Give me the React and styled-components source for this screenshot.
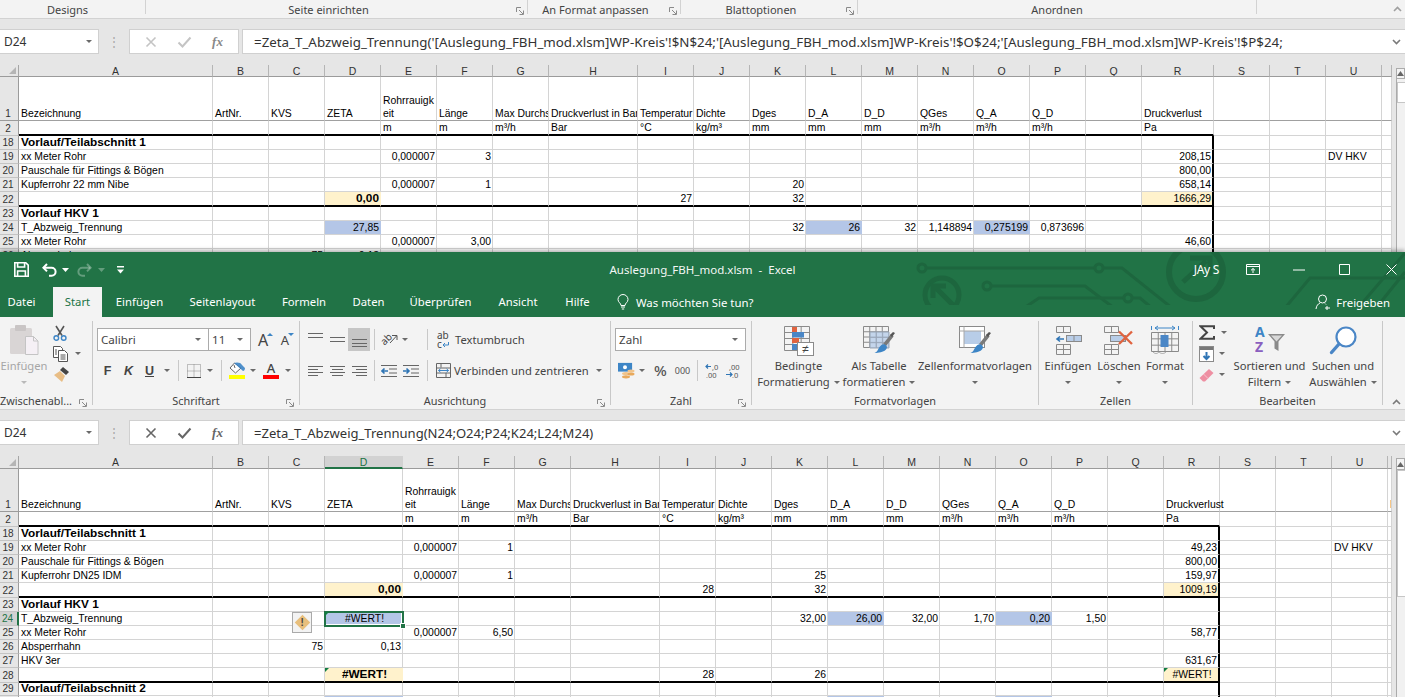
import React from 'react';
import styled, { createGlobalStyle } from 'styled-components';

const Global = createGlobalStyle`
  html, body { margin: 0; padding: 0; background: #e6e6e6; overflow: hidden; }
  #root { width: 1405px; height: 697px; overflow: hidden; }
  * { box-sizing: border-box; }
`;
const UI = `"Noto Sans", "Open Sans", sans-serif`;
const CELL = `"Liberation Sans", Arial, sans-serif`;
const GREEN = '#217346';

const Page = styled.div`width:1405px;height:697px;display:flex;flex-direction:column;overflow:hidden;font-family:${UI};`;
const BackWindow = styled.div`height:252px;overflow:hidden;flex:none;background:#e6e6e6;`;
const FrontWindow = styled.div`flex:1;min-height:0;position:relative;box-shadow:0 -2px 4px rgba(0,0,0,.3);background:#e6e6e6;`;

/* ribbon tail of the back window */
const Tail = styled.div`height:19px;display:flex;background:#f3f3f3;border-bottom:1px solid #d2d2d2;`;
const TailGroup = styled.div`
  width:${p=>p.$w}px;height:14px;padding-right:${p=>p.$pr||0}px;position:relative;flex:none;
  border-right:${p=>p.$last?'none':'1px solid #d2d2d2'};
  font-size:11px;line-height:20px;color:#444;text-align:center;white-space:nowrap;
`;
const TailLauncher = styled.span`position:absolute;right:3px;top:7px;display:flex;`;
const TailCollapse = styled.div`flex:1;display:flex;justify-content:flex-end;align-items:center;height:18px;padding-right:3px;`;

/* formula bar */
const FBar = styled.div`height:46px;padding-top:10px;display:flex;background:#e6e6e6;flex:none;`;
const NameBox = styled.div`
  width:99px;height:25px;background:#fff;border:1px solid #d0d0d0;border-left:none;
  display:flex;align-items:center;justify-content:space-between;padding:0 6px 0 4px;
  font-size:12px;color:#333;
`;
const Grip = styled.div`width:30px;height:25px;display:flex;align-items:center;justify-content:center;color:#a8a8a8;font-size:12px;letter-spacing:0;`;
const FxBox = styled.div`
  width:110px;height:25px;background:#fff;border:1px solid #d0d0d0;display:flex;align-items:center;justify-content:space-around;padding:0 5px;
`;
const FxText = styled.span`font-family:"Liberation Serif",serif;font-style:italic;font-weight:700;font-size:13px;color:${p=>p.$dim?'#888':'#666'};`;
const Formula = styled.div`
  flex:1;margin-left:3px;height:25px;background:#fff;border:1px solid #d0d0d0;border-right:none;
  display:flex;align-items:center;justify-content:space-between;padding:0 4px 0 11px;
  font-size:${p=>p.$fs}px;color:#333;white-space:nowrap;overflow:hidden;
`;

/* sheet */
const SheetArea = styled.div`display:flex;height:${p=>p.$h}px;flex:none;overflow:hidden;background:#e6e6e6;`;
const Sheet = styled.div`width:1392px;flex:none;overflow:hidden;`;
const Row = styled.div`display:grid;grid-template-columns:${p=>p.$cols};height:${p=>p.$h}px;`;
const Corner = styled.div`background:#e6e6e6;border-right:1px solid #a6a6a6;border-bottom:1px solid #9b9b9b;display:flex;align-items:flex-end;justify-content:flex-end;padding:0 2px 2px 0;`;
const ColHead = styled.div`
  background:${p=>p.$sel?'#d2d2d2':'#e6e6e6'};
  border-right:1px solid ${p=>p.$sel?'#d2d2d2':'#b5b5b5'};
  border-bottom:${p=>p.$sel?`2px solid ${GREEN}`:'1px solid #9b9b9b'};
  font-family:${CELL};font-size:10.5px;line-height:12px;text-align:center;color:${p=>p.$sel?GREEN:'#333'};overflow:hidden;
`;
const RowHead = styled.div`
  background:${p=>p.$sel?'#d2d2d2':'#e6e6e6'};
  border-right:${p=>p.$sel?`2px solid ${GREEN}`:'1px solid #9b9b9b'};
  border-bottom:1px solid ${p=>p.$strong?'#9b9b9b':'#c4c4c4'};
  font-family:${CELL};font-size:10px;line-height:13px;color:${p=>p.$sel?GREEN:'#333'};
  display:flex;align-items:flex-end;justify-content:center;padding-right:2px;overflow:hidden;
`;
const Cell = styled.div`
  position:relative;min-width:0;
  font-family:${CELL};font-size:${p=>p.$bold?11.8:10.4}px;line-height:13px;color:#000;
  font-weight:${p=>p.$bold?700:400};
  background:${p=>p.$fill||'#fff'};
  border-right:${p=>p.$edge?'2px solid #000':p.$fill?`1px solid ${p.$fill}`:'1px solid #d4d4d4'};
  border-bottom:${p=>p.$thick?'2px solid #000':p.$strong?'1px solid #a0a0a0':'1px solid #d4d4d4'};
  display:flex;align-items:flex-end;
  justify-content:${p=>p.$center?'center':p.$right?'flex-end':'flex-start'};
  padding:0 ${p=>p.$right?1:0}px 0 ${p=>p.$right?0:2}px;
  white-space:pre;overflow:${p=>p.$open?'visible':'hidden'};
  ${p=>p.$open?'z-index:1;':''}
  ${p=>p.$selected?`outline:2px solid ${GREEN};outline-offset:-1px;box-shadow:inset 0 0 0 1px #fff;z-index:2;border-color:transparent;`:''}
  ${p=>p.$flag?`&::before{content:"";position:absolute;left:0;top:0;border-top:4px solid #107c41;border-right:4px solid transparent;}`:''}
`;
const Handle = styled.span`position:absolute;right:-4px;bottom:-4px;width:6px;height:6px;background:${GREEN};border:1px solid #fff;`;
const WarnBadge = styled.span`
  position:absolute;left:23px;top:0;width:20px;height:21px;background:#f3f3f3;border:1px solid #aaa;z-index:3;
  display:flex;align-items:center;justify-content:center;
`;
const WarnDiamond = styled.span`
  width:11px;height:11px;background:#e8bf7c;transform:rotate(45deg);display:flex;align-items:center;justify-content:center;
`;
const WarnMark = styled.span`transform:rotate(-45deg);font-size:10px;font-weight:700;line-height:10px;color:#444;font-family:${CELL};`;
const Scroll = styled.div`flex:1;padding-left:4px;display:flex;flex-direction:column;background:#e6e6e6;padding-top:${p=>p.$top}px;`;
const ScrollBtn = styled.div`height:${p=>p.$h}px;background:#f3f3f3;border:1px solid #ababab;display:flex;align-items:center;justify-content:center;flex:none;`;
const ScrollTrack = styled.div`flex:1;background:#f1f1f1;border-left:1px solid #ababab;display:flex;flex-direction:column;padding-top:${p=>p.$gap}px;`;
const ScrollThumb = styled.div`height:${p=>p.$h}px;background:#fff;border:1px solid #c6c6c6;border-right:none;`;

/* title bar */
const Header = styled.div`background:${GREEN};height:65px;position:relative;flex:none;`;
const Circuit = styled.svg`position:absolute;left:900px;top:0;`;
const TitleRow = styled.div`height:35px;display:grid;grid-template-columns:1fr auto 1fr;position:relative;align-items:center;`;
const Qat = styled.div`display:flex;align-items:center;padding-left:13px;`;
const QTool = styled.div`width:${p=>p.$w}px;margin-left:${p=>p.$ml||0}px;display:flex;justify-content:center;align-items:center;flex:none;`;
const DocTitle = styled.div`color:#fff;font-size:11.5px;white-space:pre;opacity:.95;`;
const WinControls = styled.div`display:flex;justify-content:flex-end;align-items:center;`;
const UserName = styled.span`color:#fff;font-size:12px;margin-right:11px;letter-spacing:-.3px;`;
const WinBtn = styled.div`width:${p=>p.$w}px;padding-left:${p=>p.$pl||0}px;display:flex;justify-content:center;align-items:center;`;
const TabRow = styled.div`height:30px;display:flex;position:relative;`;
const Tab = styled.div`
  width:${p=>p.$w}px;margin-left:${p=>p.$ml||0}px;flex:none;height:30px;line-height:30px;text-align:center;font-size:11.3px;white-space:nowrap;
  background:${p=>p.$active?'#f3f3f3':'transparent'};color:${p=>p.$active?GREEN:'#fff'};
`;
const TellMe = styled.div`display:flex;align-items:center;gap:7px;padding-left:14px;color:#fff;font-size:11.4px;white-space:nowrap;`;
const ShareBtn = styled.div`margin-left:auto;display:flex;align-items:center;gap:4px;padding-right:15px;color:#fff;font-size:11.4px;`;

/* ribbon */
const Ribbon = styled.div`height:93px;background:#f3f3f3;border-bottom:1px solid #d2d2d2;padding-top:4px;display:flex;flex:none;position:relative;`;
const Group = styled.div`width:${p=>p.$w}px;height:84px;flex:none;border-right:1px solid #c8c8c8;display:flex;flex-direction:column;position:relative;`;
const GroupBody = styled.div`flex:1;min-height:0;display:flex;padding-left:${p=>p.$pl||0}px;`;
const GroupColumn = styled.div`display:flex;flex-direction:column;`;
const GroupLabel = styled.div`
  height:11px;line-height:14px;font-size:10.9px;color:#444;text-align:center;white-space:nowrap;padding-right:${p=>p.$pr||0}px;
`;
const Launcher = styled.span`position:absolute;right:5px;bottom:-2px;display:flex;`;
const ToolRow = styled.div`display:flex;align-items:center;height:23px;margin-top:${p=>p.$mt}px;`;
const Tool = styled.div`
  width:${p=>p.$w}px;height:${p=>p.$h||23}px;flex:none;display:flex;align-items:center;justify-content:center;
  margin-left:${p=>p.$ml||0}px;
  background:${p=>p.$active?'#c6c6c6':'transparent'};
  color:#444;
`;
const VSep = styled.div`width:1px;height:21px;background:#c8c8c8;flex:none;margin:0 ${p=>p.$r}px 0 ${p=>p.$l}px;`;
const Caret = styled.span`
  display:inline-block;width:0;height:0;border-left:3.5px solid transparent;border-right:3.5px solid transparent;
  border-top:3.5px solid ${p=>p.$light?'#b9b9b9':'#6a6a6a'};flex:none;margin-left:${p=>p.$ml||0}px;vertical-align:middle;
`;
const Combo = styled.div`
  width:${p=>p.$w}px;height:23px;background:#fff;border:1px solid #ababab;margin-left:${p=>p.$ml||0}px;flex:none;
  display:flex;align-items:center;justify-content:space-between;padding:0 7px 0 3px;font-size:11.6px;color:#444;
`;
const BigBtn = styled.div`
  width:${p=>p.$w}px;flex:none;display:flex;flex-direction:column;align-items:center;margin-left:${p=>p.$ml||0}px;
  font-size:11.2px;line-height:16px;color:${p=>p.$dim?'#a6a6a6':'#444'};white-space:nowrap;
`;
const BigIcon = styled.div`height:37px;display:flex;align-items:center;justify-content:center;padding-top:1px;flex:none;`;
const BigLine = styled.div`height:16px;display:flex;align-items:center;`;
const SmallStack = styled.div`width:${p=>p.$w}px;flex:none;display:flex;flex-direction:column;margin-top:${p=>p.$mt||0}px;padding-left:${p=>p.$pl||0}px;`;
const StackRow = styled.div`height:21px;display:flex;align-items:center;`;
const BtnText = styled.span`width:${p=>p.$w}px;flex:none;margin-left:${p=>p.$ml||0}px;font-size:11.2px;color:#444;white-space:nowrap;`;
const GlyphBold = styled.span`
  font-family:${CELL};font-weight:700;font-size:12.5px;font-style:${p=>p.$i?'italic':'normal'};
  text-decoration:${p=>p.$u?'underline':'none'};color:#444;
`;
const GrowA = styled.span`font-family:${UI};font-size:${p=>p.$s}px;line-height:14px;color:#444;position:relative;`;
const GrowMark = styled.span`
  position:absolute;right:-5px;top:0;width:0;height:0;border-left:3.5px solid transparent;border-right:3.5px solid transparent;
  ${p=>p.$down?'border-top:3.5px solid #3d85c6;':'border-bottom:3.5px solid #3d85c6;'}
`;
const ColorA = styled.span`display:flex;flex-direction:column;align-items:center;width:16px;font-family:${UI};font-size:13px;font-weight:500;line-height:12px;color:#444;`;
const ColorBar = styled.span`display:block;width:16px;height:4px;background:${p=>p.$c};margin-top:1px;`;
const Bucket = styled.span`display:flex;flex-direction:column;align-items:center;width:16px;`;
const Pct = styled.span`font-size:15px;line-height:15px;color:#555;font-weight:500;`;
const Thou = styled.span`font-size:9px;color:#555;`;
const Rot = styled.span`display:flex;align-items:center;position:relative;`;
const WrapGlyph = styled.span`font-size:10px;line-height:9px;color:#444;display:block;text-align:left;width:14px;`;
const Collapse = styled.span`position:absolute;right:4px;bottom:4px;display:flex;`;

/* ------------ svg icons ------------ */
const LauncherIcon = () => (
  <svg width="8" height="8" viewBox="0 0 8 8"><path d="M.5 5V.5H5M3 3l4 4M3.5 7.5h4v-4" fill="none" stroke="#8a8a8a" strokeWidth="1"/></svg>
);
const Chevron = ({ up, c = '#7a7a7a' }) => (
  <svg width="9" height="6" viewBox="0 0 9 6"><path d={up ? 'M1 5l3.5-3.5L8 5' : 'M1 1l3.5 3.5L8 1'} fill="none" stroke={c} strokeWidth="1.6"/></svg>
);
const SaveIcon = () => (
  <svg width="15" height="15" viewBox="0 0 15 15" fill="none" stroke="#fff" strokeWidth="1.6">
    <path d="M.8.8h11l2.4 2.4v11H.8z"/><path d="M3.6 1v4h7V1" /><path d="M3.6 14V9h7.8v5" />
  </svg>
);
const UndoIcon = ({ dim, flip }) => (
  <svg width="15" height="14" viewBox="0 0 15 14" fill="none" stroke="#fff" strokeOpacity={dim ? .3 : 1} strokeWidth="2" transform={flip ? 'scale(-1 1)' : undefined}>
    <path d="M5 1L1.4 4.7 5 8.4"/><path d="M1.6 4.7h8a4 4 0 0 1 0 8H7"/>
  </svg>
);
const QatCaret = ({ dim }) => <svg width="7" height="4" viewBox="0 0 7 4"><path d="M0 0h7L3.5 4z" fill="#fff" fillOpacity={dim ? .3 : 1}/></svg>;
const Customize = () => <svg width="7" height="8" viewBox="0 0 7 8"><path d="M0 0h7v1.4H0z M0 3.5h7L3.5 7.5z" fill="#fff"/></svg>;
const CircuitArt = () => (
  <Circuit width="505" height="53" viewBox="0 0 505 53" fill="none" stroke="#1d663e" strokeWidth="3">
    <circle cx="22" cy="16" r="4"/><path d="M26 16H195"/><circle cx="199" cy="16" r="4"/><path d="M203 16H222L272 56"/>
    <circle cx="87" cy="34" r="4"/><path d="M91 34H185L214 56"/>
    <path d="M124 56L139 46H224"/><circle cx="228" cy="46" r="4"/><path d="M232 46H240L252 56"/>
    <circle cx="42" cy="43" r="17" strokeWidth="5"/><path d="M53 53L35 35M33 46V34H46" strokeWidth="5"/>
    <circle cx="296" cy="20" r="27" strokeWidth="6"/><path d="M283 30L306 9M290 6H310V24" strokeWidth="5"/>
    <path d="M385 56L410 26H505"/><path d="M458 56L505 1"/><path d="M476 56L505 20"/>
  </Circuit>
);
const RibbonDisplay = () => (
  <svg width="14" height="11" viewBox="0 0 14 11" fill="none" stroke="#fff"><path d="M.5.5h13v10H.5zM.5 2.5h13M7 9V4.5M5 6.3L7 4.5l2 1.8"/></svg>
);
const MinIcon = () => <svg width="12" height="2" viewBox="0 0 12 2"><path d="M0 1h12" stroke="#fff"/></svg>;
const MaxIcon = () => <svg width="11" height="11" viewBox="0 0 11 11"><path d="M.5.5h10v10H.5z" stroke="#fff" fill="none"/></svg>;
const CloseIcon = () => <svg width="11" height="11" viewBox="0 0 11 11"><path d="M.5.5l10 10M10.5.5l-10 10" stroke="#fff"/></svg>;
const Bulb = () => (
  <svg width="12" height="16" viewBox="0 0 12 16" fill="none" stroke="#fff"><path d="M4 11.5C4 9 1 8.5 1 5.5a5 5 0 0 1 10 0c0 3-3 3.5-3 6zM4 13h4M4.8 15h2.4"/></svg>
);
const PersonPlus = () => (
  <svg width="17" height="16" viewBox="0 0 17 16" fill="none" stroke="#fff"><circle cx="7.5" cy="5" r="4"/><path d="M1 15c.5-3.500 2-5 4-6M10 9.500l1 1M12 12v4M10 14h5"/></svg>
);
const PasteIcon = () => (
  <svg width="29" height="30" viewBox="0 0 29 30">
    <rect x="0" y="3" width="22" height="26" rx="1.5" fill="#d9d5d5"/><rect x="5" y="0" width="11" height="6" rx="1" fill="#c9c5c5"/>
    <path d="M15.5 11.5h8l4.5 4.5v13.5H15.5z" fill="#f5f0f5" stroke="#c4c4c4"/><path d="M23.5 11.5V16h4.5" fill="none" stroke="#c4c4c4"/>
  </svg>
);
const Scissors = () => (
  <svg width="14" height="16" viewBox="0 0 14 16" fill="none">
    <path d="M3 1l6 9.5M11 1L5 10.5" stroke="#555" strokeWidth="1.6"/>
    <circle cx="3.3" cy="13" r="2.3" stroke="#3d85c6" strokeWidth="1.4"/><circle cx="10.7" cy="13" r="2.3" stroke="#3d85c6" strokeWidth="1.4"/>
  </svg>
);
const CopyIcon = () => (
  <svg width="16" height="16" viewBox="0 0 16 16" fill="#fff" stroke="#555">
    <path d="M.5.5h7l2 2v9h-9z"/><path d="M5.5 4.5h6l3 3v8h-9z"/><path d="M7.5 9h5M7.5 11h5M7.5 13h5M2 4h2M2 6h2M2 8h2" fill="none"/>
  </svg>
);
const Painter = () => (
  <svg width="17" height="17" viewBox="0 0 17 17">
    <path d="M10 1l6 5-3 3-6-5z" fill="#444"/><path d="M7 5l5 5-3 6-8-7z" fill="#e8bd85"/>
  </svg>
);
const BordersIcon = () => (
  <svg width="14" height="14" viewBox="0 0 14 14" fill="none" stroke="#888" strokeDasharray="1 1"><path d="M.5.5h13v13H.5zM.5 7h13M7 .5v13"/><path d="M0 13.5h14" stroke="#444" strokeDasharray="none"/></svg>
);
const BucketIcon = () => (
  <svg width="17" height="12" viewBox="0 0 17 12"><path d="M5.5 1L1 6l5.5 5L12 6z" fill="#fff" stroke="#666"/><path d="M5 1c2-1 7-1 8 2l3 3c0 2-1 3-2 3" fill="#3d85c6" opacity=".9"/><path d="M5 3l1 3" stroke="#666"/></svg>
);
const AlignV = ({ pos }) => {
  const ys = pos === 'top' ? [1, 5] : pos === 'mid' ? [5, 9] : [7, 11];
  return <svg width="15" height="15" viewBox="0 0 15 15"><path d={ys.map(y => `M0 ${y + .5}h15`).join('')} stroke="#666" fill="none"/>{pos === 'bot' && <path d="M0 14.500h15" stroke="#666" fill="none"/>}</svg>;
};
const AlignH = ({ pos }) => {
  const short = pos === 'left' ? 'M0 5.5h10M0 11.5h10' : pos === 'center' ? 'M2 5.5h11M2 11.5h11' : 'M4 5.5h11M4 11.5h11';
  return <svg width="15" height="13" viewBox="0 0 15 13"><path d={`M0 2.5h15M0 8.5h15${short}`} stroke="#666" fill="none"/></svg>;
};
const OrientArrow = () => (
  <svg width="17" height="17" viewBox="0 0 17 17" fill="none"><path d="M9 12L15.5 5M11 4.5h5V9" stroke="#555"/><text x="0" y="12" fontSize="10" fill="#444" fontFamily="Noto Sans" transform="rotate(-45 5 9)">ab</text></svg>
);
const Indent = ({ flip }) => (
  <svg width="16" height="14" viewBox="0 0 16 14">
    <path d="M0 1.5h16M0 12.5h16M8 5h8M8 9h8" stroke="#666" fill="none"/>
    <path d={flip ? 'M0 7h6M3.5 4.5L6 7l-2.5 2.5' : 'M7 7H1M3.5 4.5L1 7l2.5 2.5'} stroke="#2f75b5" strokeWidth="1.6" fill="none"/>
  </svg>
);
const WrapArrow = () => <svg width="7" height="6" viewBox="0 0 7 6"><path d="M6.5 0v3H1M3 1L1 3l2 2" stroke="#3d85c6" fill="none"/></svg>;
const MergeIcon = () => (
  <svg width="15" height="15" viewBox="0 0 15 15" fill="none"><path d="M.5.5h14v14H.5zM.5 5h14M.5 10h14" stroke="#666"/><path d="M5 .5v4M10 10v4.500" stroke="#666"/><path d="M2.500 7.500h10M4.500 5.800L2.500 7.500l2 1.700M10.500 5.800l2 1.700-2 1.700" stroke="#3d85c6"/></svg>
);
const MoneyIcon = () => (
  <svg width="17" height="17" viewBox="0 0 17 17">
    <rect x=".5" y="1.5" width="13" height="7.5" fill="#fff" stroke="#3d85c6" strokeWidth="1.2"/><path d="M.5 1.5h13v7.5H.5z M5 5.2a2 2 0 1 0 4 0a2 2 0 1 0-4 0" fill="#3d85c6" fillRule="evenodd"/>
    <ellipse cx="8" cy="11.5" rx="4" ry="1.6" fill="#f0c38a"/><ellipse cx="8" cy="14.8" rx="4" ry="1.6" fill="#e8a95c"/><ellipse cx="13" cy="9" rx="3.5" ry="1.5" fill="#f0c38a"/><ellipse cx="13" cy="12" rx="3.5" ry="1.5" fill="#e8a95c"/>
  </svg>
);
const DecIcon = ({ dec }) => (
  <svg width="15" height="15" viewBox="0 0 15 15" fontFamily="Noto Sans" fontSize="7.5" fill="#555">
    <text x={dec ? 3 : 7} y="6.5">{dec ? ',00' : ',0'}</text><text x={dec ? 6 : 1} y="14.5">{dec ? ',0' : ',00'}</text>
    <path d={dec ? 'M0 11.5h6M4 9.5l2 2-2 2' : 'M6 3.5H1M3 1.5l-2 2 2 2'} stroke="#2f75b5" fill="none" strokeWidth="1.2"/>
  </svg>
);
const Grid = ({ x, y, w, h, cols, rows, stroke = '#8a8a8a' }) => {
  let d = `M${x} ${y}h${w}v${h}h-${w}z`;
  for (let i = 1; i < cols; i++) d += `M${x + i * w / cols} ${y}v${h}`;
  for (let i = 1; i < rows; i++) d += `M${x} ${y + i * h / rows}h${w}`;
  return <path d={d} fill="none" stroke={stroke}/>;
};
const Brush = () => (
  <g>
    <path d="M20 19L28 9l2.6 2.4L23 21z" fill="#7a7a7a"/>
    <path d="M30 7l2 1-3 4-2-2z" fill="#555"/>
    <path d="M22 19.5c3 2 2 4 .5 5.5-2 2-7 3-11 3 3-1 3.5-4 5-6 1.5-2 3.500-3.500 5.500-2.500z" fill="#3d85c6"/>
  </g>
);
const CondIcon = () => (
  <svg width="31" height="31" viewBox="0 0 31 31">
    <Grid x={1.5} y={1.5} w={25} h={24} cols={3} rows={4}/>
    <path d="M9 2h5v5H9zM9 13h7v5H9z" fill="#e0633f"/><path d="M9 7h12v5.500H9zM9 19h5v6H9z" fill="#4a86c6"/>
    <rect x="14.500" y="17.500" width="16" height="13" fill="#fff" stroke="#8a8a8a"/>
    <text x="22.500" y="28" fontSize="12" fill="#444" textAnchor="middle" fontFamily="Liberation Sans">≠</text>
  </svg>
);
const TableIcon = () => (
  <svg width="33" height="30" viewBox="0 0 33 30">
    <Grid x={.5} y={1.5} w={25} h={21} cols={4} rows={4}/>
    <rect x="7" y="7" width="19" height="16" fill="#b8cde8" opacity=".8"/>
    <Grid x={7} y={7} w={19} h={16} cols={3} rows={3} stroke="#9aa7b8"/>
    <Brush/>
  </svg>
);
const StyleIcon = () => (
  <svg width="33" height="30" viewBox="0 0 33 30">
    <rect x=".5" y="1.500" width="25" height="21" fill="#fff" stroke="#8a8a8a"/>
    <rect x="5" y="6" width="17" height="13" fill="#b8cde8"/>
    <path d="M.5 6h25M5 1.500v21" stroke="#a8a8a8" fill="none"/>
    <Brush/>
  </svg>
);
const InsertIcon = () => (
  <svg width="27" height="29" viewBox="0 0 27 29">
    <Grid x={1.5} y={.5} w={14} h={6} cols={2} rows={1}/>
    <path d="M9 13H2.500M5 10.500L2 13l3 2.500" stroke="#2f75b5" strokeWidth="1.6" fill="none"/>
    <rect x="11.500" y="9.500" width="15" height="6" fill="#b8cde8" stroke="#8a8a8a"/><path d="M19 9.500v6" stroke="#8a8a8a"/>
    <Grid x={1.500} y={18.500} w={14} h={10} cols={2} rows={2}/>
  </svg>
);
const DeleteIcon = () => (
  <svg width="30" height="29" viewBox="0 0 30 29">
    <Grid x={.5} y={.5} w={14} h={6} cols={2} rows={1}/>
    <rect x="6.500" y="9.500" width="15" height="6" fill="#b8cde8" stroke="#8a8a8a"/>
    <Grid x={.5} y={18.500} w={14} h={10} cols={2} rows={2}/>
    <path d="M15 5.500l13 12.500M28 5.500L15 18" stroke="#e0633f" strokeWidth="2.400"/>
  </svg>
);
const FormatIcon = () => (
  <svg width="28" height="30" viewBox="0 0 28 30">
    <path d="M4 3h20M4 3l3-2M4 3l3 2M24 3l-3-2M24 3l-3 2M.5 1v4M27.500 1v4" stroke="#3d85c6" fill="none"/>
    <Grid x={.5} y={7.500} w={27} h={19} cols={4} rows={3}/>
    <rect x="9.500" y="10" width="8" height="12" fill="#4a86c6"/>
    <path d="M2 27c2 2 4 2 6 0 2 2 5 2 7 0" stroke="#a8a8a8" fill="none"/>
  </svg>
);
const SigmaIcon = () => <svg width="16" height="15" viewBox="0 0 16 15"><path d="M15 4V1.200H1.500L8 7.500 1.500 13.800H15V11" fill="none" stroke="#444" strokeWidth="2"/></svg>;
const FillIcon = () => (
  <svg width="15" height="16" viewBox="0 0 15 16"><rect x=".5" y=".5" width="14" height="15" fill="#fff" stroke="#8a8a8a"/><rect x="1" y="1" width="13" height="3" fill="#777"/><path d="M7.500 6v7M4.500 10l3 3 3-3" stroke="#2f75b5" strokeWidth="2" fill="none"/></svg>
);
const EraserIcon = () => <svg width="15" height="14" viewBox="0 0 15 14"><path d="M10 1l4.500 4L6 13.500H4L.5 10z" fill="#ee8fa2"/><path d="M4.500 6l4.500 4.500" stroke="#f7c3ce"/></svg>;
const SortIcon = () => (
  <svg width="30" height="30" viewBox="0 0 30 30" fontFamily="Noto Sans" fontWeight="700" fontSize="14">
    <text x="0" y="12" fill="#3d85c6">A</text><text x="0" y="27" fill="#8a5fbf">Z</text>
    <path d="M13 9h17l-6.500 7.500V26l-4-2.500v-7z" fill="#8a8a8a"/><path d="M16 10.500h11l-5.500 6z" fill="#d8d8d8"/>
  </svg>
);
const FindIcon = () => (
  <svg width="28" height="29" viewBox="0 0 28 29" fill="none"><circle cx="17" cy="11" r="9.500" stroke="#4a86c6" strokeWidth="2.200" fill="#fff"/><path d="M10 18L2.500 26.500" stroke="#4a86c6" strokeWidth="3.400" strokeLinecap="round"/></svg>
);
const SheetCorner = () => <svg width="7" height="7" viewBox="0 0 7 7"><path d="M7 0v7H0z" fill="#b5b5b5"/></svg>;
const ScrollUp = () => <svg width="7" height="5" viewBox="0 0 7 5"><path d="M3.500 0L7 5H0z" fill="#666"/></svg>;
const X = ({ c }) => <svg width="12" height="12" viewBox="0 0 12 12"><path d="M1.500 1.500l9 9M10.500 1.500l-9 9" stroke={c} strokeWidth="1.600"/></svg>;
const Check = ({ c }) => <svg width="15" height="12" viewBox="0 0 15 12"><path d="M1.500 6.500L5.500 10.500 13.500 1.500" stroke={c} strokeWidth="2" fill="none"/></svg>;

/* ------------ sheet data ------------ */
const LETTERS = 'ABCDEFGHIJKLMNOPQRSTUV'.split('');
const Y = '#fff2cc', B = '#b4c6e7';
const R = (v, extra) => ({ v, right: true, ...extra });

const head = {
  A: 'Bezeichnung', B: 'ArtNr.', C: 'KVS', D: 'ZETA', E: 'Rohrrauigk\neit', F: 'Länge', G: 'Max Durchs', H: 'Druckverlust in Bar',
  I: 'Temperatur', J: 'Dichte', K: 'Dges', L: 'D_A', M: 'D_D', N: 'QGes', O: 'Q_A', P: 'Q_D', R: { v: 'Druckverlust', open: true },
};
const units = { E: 'm', F: 'm', G: 'm³/h', H: 'Bar', I: '°C', J: 'kg/m³', K: 'mm', L: 'mm', M: 'mm', N: 'm³/h', O: 'm³/h', P: 'm³/h', R: 'Pa' };
const bold = v => ({ v, bold: true });

const backRows = [
  { n: '1', h: 44, strong: true, cells: head },
  { n: '2', h: 15, thick: true, cells: units },
  { n: '18', h: 14, cells: { A: bold('Vorlauf/Teilabschnitt 1') } },
  { n: '19', h: 14, cells: { A: 'xx Meter Rohr', E: R('0,000007'), F: R('3'), R: R('208,15'), U: 'DV HKV' } },
  { n: '20', h: 14, cells: { A: 'Pauschale für Fittings & Bögen', R: R('800,00') } },
  { n: '21', h: 14, cells: { A: 'Kupferrohr 22 mm Nibe', E: R('0,000007'), F: R('1'), K: R('20'), R: R('658,14') } },
  { n: '22', h: 15, thick: true, cells: { D: R('0,00', { bold: true, fill: Y }), I: R('27'), K: R('32'), R: R('1666,29', { fill: Y }) } },
  { n: '23', h: 14, cells: { A: bold('Vorlauf HKV 1') } },
  { n: '24', h: 14, cells: { A: 'T_Abzweig_Trennung', D: R('27,85', { fill: B }), K: R('32'), L: R('26', { fill: B }), M: R('32'), N: R('1,148894'), O: R('0,275199', { fill: B }), P: R('0,873696') } },
  { n: '25', h: 14, cells: { A: 'xx Meter Rohr', E: R('0,000007'), F: R('3,00'), R: R('46,60') } },
  { n: '26', h: 14, cells: { A: 'Absperrhahn', C: R('75'), D: R('0,13') } },
];
const frontRows = [
  { n: '1', h: 43, strong: true, cells: { ...head, V: 'D' } },
  { n: '2', h: 15, thick: true, cells: units },
  { n: '18', h: 14, cells: { A: bold('Vorlauf/Teilabschnitt 1') } },
  { n: '19', h: 14, cells: { A: 'xx Meter Rohr', E: R('0,000007'), F: R('1'), R: R('49,23'), U: 'DV HKV' } },
  { n: '20', h: 14, cells: { A: 'Pauschale für Fittings & Bögen', R: R('800,00') } },
  { n: '21', h: 14, cells: { A: 'Kupferrohr DN25 IDM', E: R('0,000007'), F: R('1'), K: R('25'), R: R('159,97') } },
  { n: '22', h: 15, thick: true, cells: { D: R('0,00', { bold: true, fill: Y }), I: R('28'), K: R('32'), R: R('1009,19', { fill: Y }) } },
  { n: '23', h: 14, cells: { A: bold('Vorlauf HKV 1') } },
  { n: '24', h: 14, sel: true, cells: {
    A: 'T_Abzweig_Trennung', C: { v: '', warn: true }, D: { v: '#WERT!', center: true, fill: B, selected: true, flag: true },
    K: R('32,00'), L: R('26,00', { fill: B }), M: R('32,00'), N: R('1,70'), O: R('0,20', { fill: B }), P: R('1,50') } },
  { n: '25', h: 14, cells: { A: 'xx Meter Rohr', E: R('0,000007'), F: R('6,50'), R: R('58,77') } },
  { n: '26', h: 14, cells: { A: 'Absperrhahn', C: R('75'), D: R('0,13') } },
  { n: '27', h: 14, cells: { A: 'HKV 3er', R: R('631,67') } },
  { n: '28', h: 15, thick: true, cells: { D: { v: '#WERT!', center: true, bold: true, fill: Y, flag: true }, I: R('28'), K: R('26'), R: { v: '#WERT!', center: true, fill: Y, flag: true } } },
  { n: '29', h: 13, cells: { A: bold('Vorlauf/Teilabschnitt 2') } },
  { n: '30', h: 14, cells: { D: R('', { fill: B }), L: R('', { fill: B }), O: R('', { fill: B }) } },
];

const toCols = b => b.slice(1).map((x, i) => `${x - b[i]}px`).join(' ');
const BACK_B = [0, 19, 213, 269, 325, 381, 437, 493, 549, 638, 694, 750, 806, 862, 918, 974, 1030, 1086, 1142, 1214, 1270, 1326, 1382, 1392];
const FRONT_B = [0, 19, 213, 269, 325, 403, 459, 515, 571, 660, 716, 772, 828, 884, 940, 996, 1052, 1108, 1164, 1220, 1276, 1332, 1388, 1392];

function SheetGrid({ bounds, rows, headH, selCol }) {
  const cols = toCols(bounds);
  return (
    <Sheet>
      <Row $cols={cols} $h={headH}>
        <Corner><SheetCorner /></Corner>
        {LETTERS.map(l => <ColHead key={l} $sel={l === selCol}>{l === 'V' ? '' : l}</ColHead>)}
      </Row>
      {rows.map(r => (
        <Row key={r.n} $cols={cols} $h={r.h}>
          <RowHead $sel={r.sel} $strong={r.strong}>{r.n}</RowHead>
          {LETTERS.map(l => {
            const raw = r.cells[l];
            const c = typeof raw === 'string' ? { v: raw } : raw || {};
            const inFrame = l <= 'R';
            return (
              <Cell key={l} $bold={c.bold} $right={c.right} $center={c.center} $fill={c.fill}
                $selected={c.selected} $flag={c.flag} $open={c.selected || c.warn || c.open}
                $strong={r.strong} $thick={r.thick && inFrame}
                $edge={l === 'R' && Number(r.n) >= 18}>
                {c.v}
                {c.selected && <Handle />}
                {c.warn && <WarnBadge><WarnDiamond><WarnMark>!</WarnMark></WarnDiamond></WarnBadge>}
              </Cell>
            );
          })}
        </Row>
      ))}
    </Sheet>
  );
}

function FormulaRow({ text, fs, dim }) {
  const c = dim ? '#c4c4c4' : '#666';
  return (
    <FBar>
      <NameBox>D24<Caret /></NameBox>
      <Grip>⋮</Grip>
      <FxBox><X c={c} /><Check c={c} /><FxText $dim={dim}>fx</FxText></FxBox>
      <Formula $fs={fs}>{text}<Chevron /></Formula>
    </FBar>
  );
}

const BACK_F = "=Zeta_T_Abzweig_Trennung('[Auslegung_FBH_mod.xlsm]WP-Kreis'!$N$24;'[Auslegung_FBH_mod.xlsm]WP-Kreis'!$O$24;'[Auslegung_FBH_mod.xlsm]WP-Kreis'!$P$24;";
const FRONT_F = '=Zeta_T_Abzweig_Trennung(N24;O24;P24;K24;L24;M24)';

export default function App() {
  return (
    <Page>
      <Global />
      <BackWindow>
        <Tail>
          <TailGroup $w={146} $pr={10}>Designs</TailGroup>
          <TailGroup $w={382} $pr={16}>Seite einrichten<TailLauncher><LauncherIcon /></TailLauncher></TailGroup>
          <TailGroup $w={153} $pr={17}>An Format anpassen<TailLauncher><LauncherIcon /></TailLauncher></TailGroup>
          <TailGroup $w={177} $pr={16}>Blattoptionen<TailLauncher><LauncherIcon /></TailLauncher></TailGroup>
          <TailGroup $w={399}>Anordnen</TailGroup>
          <TailCollapse><Chevron up c="#a0a0a0" /></TailCollapse>
        </Tail>
        <FormulaRow text={BACK_F} fs={13.35} dim />
        <SheetArea $h={187}>
          <SheetGrid bounds={BACK_B} rows={backRows} headH={12} />
          <Scroll $top={3}>
            <ScrollBtn $h={11}><ScrollUp /></ScrollBtn>
            <ScrollTrack $gap={3}><ScrollThumb $h={21} /></ScrollTrack>
          </Scroll>
        </SheetArea>
      </BackWindow>

      <FrontWindow>
        <Header>
          <CircuitArt />
          <TitleRow>
            <Qat>
              <QTool $w={17}><SaveIcon /></QTool>
              <QTool $w={27} $ml={6}><UndoIcon /></QTool>
              <QTool $w={7} $ml={-1}><QatCaret /></QTool>
              <QTool $w={30}><UndoIcon dim flip /></QTool>
              <QTool $w={7} $ml={-1}><QatCaret dim /></QTool>
              <QTool $w={30}><Customize /></QTool>
            </Qat>
            <DocTitle>Auslegung_FBH_mod.xlsm  -  Excel</DocTitle>
            <WinControls>
              <UserName>JAy S</UserName>
              <WinBtn $w={46}><RibbonDisplay /></WinBtn>
              <WinBtn $w={46}><MinIcon /></WinBtn>
              <WinBtn $w={45}><MaxIcon /></WinBtn>
              <WinBtn $w={38} $pl={11}><CloseIcon /></WinBtn>
            </WinControls>
          </TitleRow>
          <TabRow>
            <Tab $w={43}>Datei</Tab>
            <Tab $w={49} $ml={10} $active>Start</Tab>
            <Tab $w={75}>Einfügen</Tab>
            <Tab $w={91}>Seitenlayout</Tab>
            <Tab $w={72}>Formeln</Tab>
            <Tab $w={57}>Daten</Tab>
            <Tab $w={87}>Überprüfen</Tab>
            <Tab $w={68}>Ansicht</Tab>
            <Tab $w={51}>Hilfe</Tab>
            <TellMe><Bulb />Was möchten Sie tun?</TellMe>
            <ShareBtn><PersonPlus />Freigeben</ShareBtn>
          </TabRow>
        </Header>

        <Ribbon>
          <Group $w={93}>
            <GroupBody>
              <BigBtn $w={48} $dim>
                <BigIcon><PasteIcon /></BigIcon>
                <BigLine>Einfügen</BigLine>
                <BigLine><Caret $light /></BigLine>
              </BigBtn>
              <SmallStack $w={42} $mt={1} $pl={5}>
                <StackRow><Scissors /></StackRow>
                <StackRow><CopyIcon /><Caret $ml={6} /></StackRow>
                <StackRow><Painter /></StackRow>
              </SmallStack>
            </GroupBody>
            <GroupLabel $pr={22}>Zwischenabl...</GroupLabel>
            <Launcher><LauncherIcon /></Launcher>
          </Group>

          <Group $w={207}>
            <GroupBody $pl={4}>
              <GroupColumn>
                <ToolRow $mt={7}>
                  <Combo $w={112}>Calibri<Caret /></Combo>
                  <Combo $w={43} $ml={-1}>11<Caret /></Combo>
                  <Tool $w={22} $ml={1}><GrowA $s={16}>A<GrowMark /></GrowA></Tool>
                  <Tool $w={22}><GrowA $s={13}>A<GrowMark $down /></GrowA></Tool>
                </ToolRow>
                <ToolRow $mt={8}>
                  <Tool $w={21}><GlyphBold>F</GlyphBold></Tool>
                  <Tool $w={21}><GlyphBold $i>K</GlyphBold></Tool>
                  <Tool $w={21}><GlyphBold $u>U</GlyphBold></Tool>
                  <Tool $w={14}><Caret /></Tool>
                  <VSep $l={4} $r={5} />
                  <Tool $w={19}><BordersIcon /></Tool>
                  <Tool $w={14}><Caret /></Tool>
                  <VSep $l={4} $r={4} />
                  <Tool $w={22}><Bucket><BucketIcon /><ColorBar $c="#ffff00" /></Bucket></Tool>
                  <Tool $w={10}><Caret /></Tool>
                  <Tool $w={26}><ColorA>A<ColorBar $c="#ff0000" /></ColorA></Tool>
                  <Tool $w={7}><Caret /></Tool>
                </ToolRow>
              </GroupColumn>
            </GroupBody>
            <GroupLabel>Schriftart</GroupLabel>
            <Launcher><LauncherIcon /></Launcher>
          </Group>

          <Group $w={311}>
            <GroupBody $pl={4}>
              <GroupColumn>
                <ToolRow $mt={7}>
                  <Tool $w={22}><AlignV pos="top" /></Tool>
                  <Tool $w={22}><AlignV pos="mid" /></Tool>
                  <Tool $w={22} $active><AlignV pos="bot" /></Tool>
                  <VSep $l={4} $r={3} />
                  <Tool $w={22}><OrientArrow /></Tool>
                  <Tool $w={9}><Caret /></Tool>
                  <VSep $l={18} $r={9} />
                  <Tool $w={14}><Rot><span><WrapGlyph>ab</WrapGlyph><WrapGlyph>c<WrapArrow /></WrapGlyph></span></Rot></Tool>
                  <BtnText $w={80} $ml={4}>Textumbruch</BtnText>
                </ToolRow>
                <ToolRow $mt={8}>
                  <Tool $w={22}><AlignH pos="left" /></Tool>
                  <Tool $w={22}><AlignH pos="center" /></Tool>
                  <Tool $w={22}><AlignH pos="right" /></Tool>
                  <VSep $l={4} $r={3} />
                  <Tool $w={22}><Indent /></Tool>
                  <Tool $w={22}><Indent flip /></Tool>
                  <VSep $l={5} $r={8} />
                  <Tool $w={15}><MergeIcon /></Tool>
                  <BtnText $w={134} $ml={3}>Verbinden und zentrieren</BtnText>
                  <Tool $w={22}><Caret /></Tool>
                </ToolRow>
              </GroupColumn>
            </GroupBody>
            <GroupLabel>Ausrichtung</GroupLabel>
            <Launcher><LauncherIcon /></Launcher>
          </Group>

          <Group $w={141}>
            <GroupBody $pl={4}>
              <GroupColumn>
                <ToolRow $mt={7}><Combo $w={131}>Zahl<Caret /></Combo></ToolRow>
                <ToolRow $mt={8}>
                  <Tool $w={22}><MoneyIcon /></Tool>
                  <Tool $w={10}><Caret /></Tool>
                  <Tool $w={27}><Pct>%</Pct></Tool>
                  <Tool $w={17}><Thou>000</Thou></Tool>
                  <VSep $l={6} $r={5} />
                  <Tool $w={18}><DecIcon /></Tool>
                  <Tool $w={18} $ml={3}><DecIcon dec /></Tool>
                </ToolRow>
              </GroupColumn>
            </GroupBody>
            <GroupLabel>Zahl</GroupLabel>
            <Launcher><LauncherIcon /></Launcher>
          </Group>

          <Group $w={287}>
            <GroupBody $pl={1}>
              <BigBtn $w={91}><BigIcon><CondIcon /></BigIcon><BigLine>Bedingte</BigLine><BigLine>Formatierung<Caret $ml={4} /></BigLine></BigBtn>
              <BigBtn $w={70}><BigIcon><TableIcon /></BigIcon><BigLine>Als Tabelle</BigLine><BigLine>formatieren<Caret $ml={4} /></BigLine></BigBtn>
              <BigBtn $w={122}><BigIcon><StyleIcon /></BigIcon><BigLine>Zellenformatvorlagen</BigLine><BigLine><Caret /></BigLine></BigBtn>
            </GroupBody>
            <GroupLabel>Formatvorlagen</GroupLabel>
          </Group>

          <Group $w={154}>
            <GroupBody $pl={1}>
              <BigBtn $w={56}><BigIcon><InsertIcon /></BigIcon><BigLine>Einfügen</BigLine><BigLine><Caret /></BigLine></BigBtn>
              <BigBtn $w={46}><BigIcon><DeleteIcon /></BigIcon><BigLine>Löschen</BigLine><BigLine><Caret /></BigLine></BigBtn>
              <BigBtn $w={46}><BigIcon><FormatIcon /></BigIcon><BigLine>Format</BigLine><BigLine><Caret /></BigLine></BigBtn>
            </GroupBody>
            <GroupLabel>Zellen</GroupLabel>
          </Group>

          <Group $w={190}>
            <GroupBody>
              <SmallStack $w={37} $mt={1} $pl={6}>
                <StackRow><SigmaIcon /><Caret $ml={6} /></StackRow>
                <StackRow><FillIcon /><Caret $ml={5} /></StackRow>
                <StackRow><EraserIcon /><Caret $ml={5} /></StackRow>
              </SmallStack>
              <BigBtn $w={79}><BigIcon><SortIcon /></BigIcon><BigLine>Sortieren und</BigLine><BigLine>Filtern<Caret $ml={4} /></BigLine></BigBtn>
              <BigBtn $w={68}><BigIcon><FindIcon /></BigIcon><BigLine>Suchen und</BigLine><BigLine>Auswählen<Caret $ml={4} /></BigLine></BigBtn>
            </GroupBody>
            <GroupLabel>Bearbeiten</GroupLabel>
          </Group>
          <Collapse><Chevron up /></Collapse>
        </Ribbon>

        <FormulaRow text={FRONT_F} fs={13.05} />
        <SheetArea $h={241}>
          <SheetGrid bounds={FRONT_B} rows={frontRows} headH={13} selCol="D" />
          <Scroll $top={2}>
            <ScrollBtn $h={12}><ScrollUp /></ScrollBtn>
            <ScrollTrack $gap={0}><ScrollThumb $h={127} /></ScrollTrack>
          </Scroll>
        </SheetArea>
      </FrontWindow>
    </Page>
  );
}
